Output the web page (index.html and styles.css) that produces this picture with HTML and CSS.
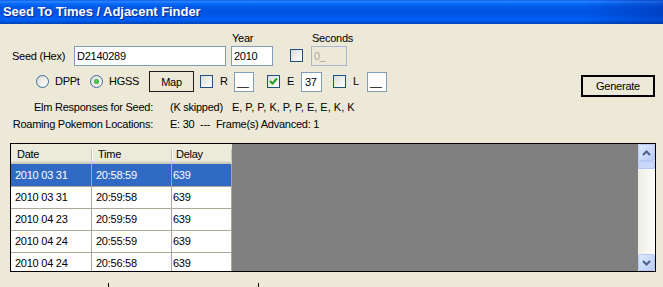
FILE: index.html
```html
<!DOCTYPE html>
<html lang="en">
  <head>
    <meta charset="UTF-8" />
    <title>Seed To Times / Adjacent Finder</title>
    <link rel="stylesheet" href="styles.css">
  </head>
  <body>
    <div class="titlebar">Seed To Times / Adjacent Finder</div>

    <div class="seed-row">
      <span class="seed-label">Seed (Hex)</span>
      <div class="textbox seed-box">D2140289</div>
      <div class="field year-field">
        <span class="field-label">Year</span>
        <div class="textbox">2010</div>
      </div>
      <span class="check seconds-check"></span>
      <div class="field seconds-field">
        <span class="field-label">Seconds</span>
        <div class="textbox disabled">0_</div>
      </div>
    </div>

    <div class="options-row">
      <span class="radio radio-dppt"></span>
      <span class="opt-text dppt-text">DPPt</span>
      <span class="radio checked"></span>
      <span class="opt-text hgss-text">HGSS</span>
      <button class="map-btn">Map</button>
      <span class="check check-r"></span>
      <span class="opt-text letter">R</span>
      <div class="textbox small-box">__</div>
      <span class="check check-e">
        <svg width="11" height="11" viewBox="0 0 11 11"><polyline points="2,5 4.5,7.5 9,2.5" fill="none" stroke="#21a121" stroke-width="2" /></svg>
      </span>
      <span class="opt-text letter">E</span>
      <div class="textbox small-box e-box">37</div>
      <span class="check check-l"></span>
      <span class="opt-text letter">L</span>
      <div class="textbox small-box">__</div>
      <button class="generate">Generate</button>
    </div>

    <div class="info">
      <span class="info-label">Elm Responses for Seed:</span>
      <span class="info-value">(K skipped)<span class="elm-list">E, P, P, K, P, P, E, E, K, K</span></span>
      <span class="info-label">Roaming Pokemon Locations:</span>
      <span class="info-value">E: 30  ---  Frame(s) Advanced: 1</span>
    </div>

    <div class="results">
      <div class="table">
        <div class="head">
          <div class="hcell c1">Date</div>
          <div class="hcell c2">Time</div>
          <div class="hcell c3">Delay</div>
        </div>
        <div class="rows">
          <div class="row first selected">
            <div class="cell c1">2010 03 31</div>
            <div class="cell c2">20:58:59</div>
            <div class="cell c3">639</div>
          </div>
          <div class="row">
            <div class="cell c1">2010 03 31</div>
            <div class="cell c2">20:59:58</div>
            <div class="cell c3">639</div>
          </div>
          <div class="row">
            <div class="cell c1">2010 04 23</div>
            <div class="cell c2">20:59:59</div>
            <div class="cell c3">639</div>
          </div>
          <div class="row">
            <div class="cell c1">2010 04 24</div>
            <div class="cell c2">20:55:59</div>
            <div class="cell c3">639</div>
          </div>
          <div class="row">
            <div class="cell c1">2010 04 24</div>
            <div class="cell c2">20:56:58</div>
            <div class="cell c3">639</div>
          </div>
        </div>
      </div>
      <div class="empty"></div>
      <div class="scrollbar">
        <div class="sb-btn">
          <svg width="9" height="6" viewBox="0 0 9 6"><polyline points="1,5 4.5,1.5 8,5" fill="none" stroke="#4d6185" stroke-width="2" /></svg>
        </div>
        <div class="sb-thumb"></div>
        <div class="sb-track"></div>
        <div class="sb-btn">
          <svg width="9" height="6" viewBox="0 0 9 6"><polyline points="1,1 4.5,4.5 8,1" fill="none" stroke="#4d6185" stroke-width="2" /></svg>
        </div>
      </div>
    </div>

    <div class="ticks">
      <span class="tick tick-a"></span>
      <span class="tick tick-b"></span>
    </div>
  </body>
</html>
```

FILE: styles.css
```css
* {
  margin: 0;
  padding: 0;
  box-sizing: border-box;
}

body {
  background: #ece9d8;
  font-family: "Liberation Sans", "DejaVu Sans", sans-serif;
  font-size: 11px;
  letter-spacing: -0.25px;
  color: #000;
  overflow: hidden;
}

/* window title */
.titlebar {
  height: 24px;
  line-height: 24px;
  padding-left: 3px;
  color: #fff;
  font-size: 13px;
  font-weight: bold;
  letter-spacing: -0.05px;
  text-shadow: 1px 1px #0c2a8a;
  background:
    linear-gradient(to right, rgba(0, 30, 140, 0) 88%, rgba(0, 30, 140, 0.35) 100%),
    linear-gradient(to bottom, #0a5fee 0%, #2e86ff 8%, #0a6bfa 14%, #0058e6 30%, #0054e3 55%, #005aef 70%, #0060f5 82%, #0052d8 92%, #0041b5 100%);
}

/* seed row */
.seed-row {
  display: flex;
  align-items: flex-end;
  margin-top: 8px;
}

.seed-label {
  margin-left: 12px;
  width: 62px;
  line-height: 20px;
}

.textbox {
  height: 20px;
  border: 1px solid #7f9db9;
  background: #fff;
  padding-left: 2px;
  line-height: 18px;
  white-space: nowrap;
}

.textbox.disabled {
  background: #ece9d8;
  border-color: #a9b8cb;
  color: #aca899;
}

.seed-box {
  width: 152px;
}

.field-label {
  display: block;
  line-height: 13px;
  padding-left: 1px;
  margin-bottom: 1px;
  white-space: nowrap;
}

.year-field {
  margin-left: 5px;
  width: 42px;
}

.seconds-check {
  margin-left: 17px;
  margin-bottom: 4px;
}

.seconds-field {
  margin-left: 8px;
  width: 36px;
}

/* controls */
.check {
  display: flex;
  align-items: center;
  justify-content: center;
  width: 13px;
  height: 13px;
  border: 1px solid #1c5180;
  background: linear-gradient(135deg, #dcdcd7, #ffffff);
}

.radio {
  display: flex;
  align-items: center;
  justify-content: center;
  width: 13px;
  height: 13px;
  border: 1px solid #3d6a97;
  border-radius: 50%;
  background: linear-gradient(135deg, #dcdcd7, #ffffff);
}

.radio.checked::after {
  content: "";
  width: 5px;
  height: 5px;
  border-radius: 50%;
  background: radial-gradient(circle, #5fd35f, #21a121);
}

.options-row {
  display: flex;
  align-items: center;
  height: 21px;
  margin-top: 5px;
}

.opt-text {
  line-height: 13px;
  white-space: nowrap;
}

.radio-dppt {
  margin-left: 36px;
}

.dppt-text {
  margin-left: 6px;
  width: 35px;
}

.hgss-text {
  margin-left: 6px;
  width: 40px;
}

.map-btn {
  width: 45px;
  height: 21px;
  border: 1px solid #1e1e1e;
  background: #ece9d8;
  font: inherit;
  letter-spacing: inherit;
}

.check-r {
  margin-left: 6px;
}

.letter {
  margin-left: 7px;
  width: 14px;
}

.small-box {
  width: 20px;
}

.e-box {
  width: 21px;
  padding-left: 3px;
}

.check-e {
  margin-left: 13px;
}

.check-l {
  margin-left: 11px;
}

.generate {
  align-self: flex-start;
  margin-top: 4px;
  margin-left: auto;
  margin-right: 8px;
  width: 74px;
  height: 22px;
  border: 2px solid #000;
  background: #ece9d8;
  font: inherit;
  letter-spacing: inherit;
}

/* info lines */
.info {
  display: grid;
  grid-template-columns: 153px auto;
  column-gap: 17px;
  margin-top: 7px;
  line-height: 17px;
  white-space: pre;
}

.info-label {
  text-align: right;
}

.elm-list {
  margin-left: 9px;
  letter-spacing: 0;
}

/* results grid */
.results {
  display: flex;
  height: 129px;
  margin: 10px 7px 0 10px;
  border: 1px solid #000;
}

.table {
  width: 221px;
  overflow: hidden;
  background: #fff;
}

.head {
  display: flex;
  height: 20px;
  background: #ebeadb;
  box-shadow: inset 0 -1px #cbc7b8, inset 0 -2px #d6d2c2, inset 0 -3px #e2decd;
}

.hcell {
  position: relative;
  line-height: 20px;
}

.hcell::after {
  content: "";
  position: absolute;
  right: 0;
  top: 5px;
  bottom: 3px;
  width: 1px;
  background: #c7c5b2;
  box-shadow: 1px 0 #fff;
}

.c1 {
  width: 81px;
}

.c2 {
  width: 80px;
}

.c3 {
  width: 60px;
}

.hcell.c1,
.hcell.c2 {
  padding-left: 6px;
}

.hcell.c3 {
  padding-left: 4px;
}

.row {
  display: flex;
  height: 22px;
  line-height: 21px;
  border-bottom: 1px solid #aca899;
}

.row.first {
  height: 23px;
  line-height: 22px;
}

.row.selected {
  background: #316ac5;
  color: #fff;
}

.cell {
  border-right: 1px solid #aca899;
  white-space: nowrap;
}

.cell.c1,
.cell.c2 {
  padding-left: 4px;
}

.cell.c3 {
  padding-left: 1px;
}

.empty {
  flex: 1;
  background: #808080;
}

/* scrollbar */
.scrollbar {
  display: flex;
  flex-direction: column;
  width: 17px;
  background: linear-gradient(to right, #eeede5, #fdfdfb);
}

.sb-btn {
  display: flex;
  align-items: center;
  justify-content: center;
  height: 17px;
  border: 1px solid #b5c8f3;
  border-radius: 2px;
  background: linear-gradient(135deg, #dde8fe, #b9cdf9);
}

.sb-thumb {
  height: 8px;
  border: 1px solid #b4c8f6;
  border-radius: 1px;
  background: #c9d7fb;
}

.sb-track {
  flex: 1;
}

/* bits of the next control peeking in */
.ticks {
  display: flex;
  height: 4px;
  margin-top: 11px;
}

.tick {
  width: 1px;
  background: #000;
}

.tick-a {
  margin-left: 108px;
}

.tick-b {
  margin-left: 149px;
}
```
